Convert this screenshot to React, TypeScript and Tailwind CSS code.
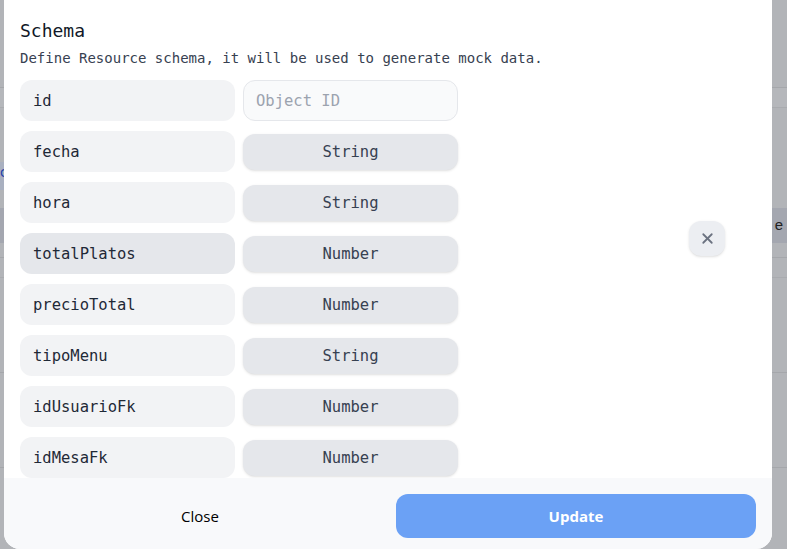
import { X } from "lucide-react";

type Field = { name: string; type: string; hover?: boolean };

const fields: Field[] = [
  { name: "fecha", type: "String" },
  { name: "hora", type: "String" },
  { name: "totalPlatos", type: "Number", hover: true },
  { name: "precioTotal", type: "Number" },
  { name: "tipoMenu", type: "String" },
  { name: "idUsuarioFk", type: "Number" },
  { name: "idMesaFk", type: "Number" },
];

const mono = "font-['DejaVu_Sans_Mono',monospace]";

export default function App() {
  return (
    <div className="relative w-[787px] h-[549px] overflow-hidden bg-[#b2b4b8]">
      {/* page behind the overlay */}
      <div className="flex flex-col">
        <div className="h-[88px] border-b border-[#a5a7ab]" />
        <div className="h-[20px] bg-[#b5b7bb] border-b border-[#a9abaf]" />
        <div className="h-[54px]" />
        <div className="h-[28px] w-[12px] bg-[#a9b0c0] text-[#1d3fa8] text-sm">c</div>
        <div className="h-[18px]" />
        <div className="h-[35px] bg-[#a4a7b0] flex justify-end items-center pr-[4px] text-[#222] text-[15px] font-['Liberation_Sans',sans-serif]">
          e
        </div>
        <div className="h-[15px] border-b border-[#a5a7ab]" />
        <div className="h-[20px] border-b border-[#a9abaf]" />
        <div className="h-[95px] border-b border-[#a5a7ab]" />
        <div className="h-[95px] border-b border-[#a5a7ab]" />
      </div>

      {/* modal */}
      <div className="absolute left-[4px] top-0 w-[768px] h-[549px] bg-white rounded-b-2xl flex flex-col overflow-hidden">
        <div className="flex-1 overflow-hidden px-4 pt-[19px]">
          <h2 className={`${mono} text-[18px] leading-[24px] text-[#111827]`}>Schema</h2>
          <p className={`${mono} text-[14px] leading-[20px] text-[#374151] mt-[5px]`}>
            Define Resource schema, it will be used to generate mock data.
          </p>
          <div className="flex flex-col gap-[10px] mt-[12px]">
            <div className="flex items-center gap-2">
              <div className={`w-[215px] h-[41px] rounded-xl bg-[#f2f3f5] flex items-center pl-[13px] pt-[2px] ${mono} text-[15.5px] text-[#1f2937]`}>
                id
              </div>
              <div className={`w-[215px] h-[41px] rounded-xl bg-[#f9fafb] border border-[#e5e7eb] flex items-center pl-[12px] pt-[2px] ${mono} text-[15.5px] text-[#9ca3af]`}>
                Object ID
              </div>
            </div>
            {fields.map((f) => (
              <div key={f.name} className="flex items-center gap-2">
                <div
                  className={`w-[215px] h-[41px] rounded-xl flex items-center pl-[13px] pt-[2px] ${mono} text-[15.5px] text-[#1f2937] ${
                    f.hover ? "bg-[#e5e7eb]" : "bg-[#f2f3f5]"
                  }`}
                >
                  {f.name}
                </div>
                <div className={`w-[215px] h-[36px] rounded-xl bg-[#e5e7eb] shadow-sm flex items-center justify-center pt-[2px] ${mono} text-[15.5px] text-[#374151]`}>
                  {f.type}
                </div>
              </div>
            ))}
          </div>
        </div>

        <div className="h-[71px] shrink-0 bg-[#f8f9fb] grid grid-cols-2 gap-4 px-4 pt-4">
          <button className="h-[44px] rounded-xl text-[15px] font-medium text-black font-['Open_Sans',sans-serif]">
            Close
          </button>
          <button className="h-[44px] rounded-xl bg-[#6ba1f5] text-[15px] font-bold text-white font-['Open_Sans',sans-serif]">
            Update
          </button>
        </div>

        {/* floating delete button */}
        <button className="absolute left-[685px] top-[221px] w-[36px] h-[35px] rounded-xl bg-[#eceef2] shadow-sm flex items-center justify-center">
          <X size={17} strokeWidth={2.5} className="text-[#6b7280]" />
        </button>
      </div>
    </div>
  );
}
